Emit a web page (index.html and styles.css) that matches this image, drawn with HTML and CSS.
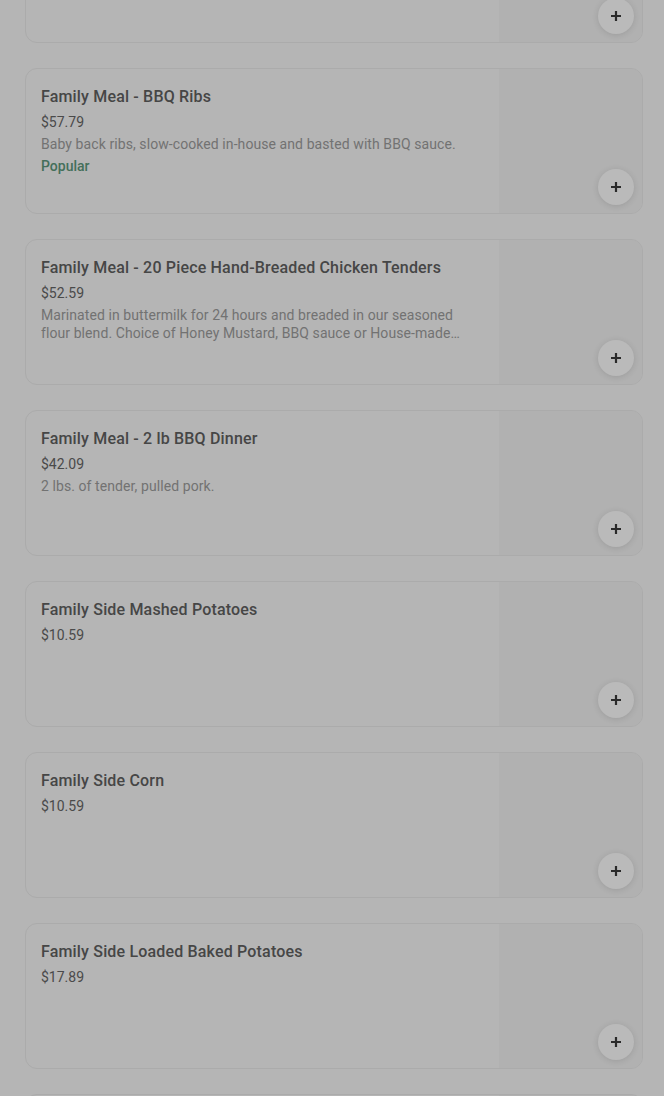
FILE: index.html
```html
<!DOCTYPE html>
<html lang="en">
<head>
<meta charset="utf-8">
<title>Menu</title>
<link rel="stylesheet" href="styles.css">
</head>
<body>
<main class="menu">
  <ul class="items">
    <li class="card">
      <div class="info">
        <h3 class="title">Family Meal - Smoked Chicken</h3>
        <p class="price">$47.39</p>
        <p class="desc">Half smoked chicken, slow-cooked in-house.</p>
      </div>
      <div class="thumb"><button class="add" aria-label="Add"><svg viewBox="0 0 12 12" width="12" height="12"><path d="M6 1v10M1 6h10" stroke="currentColor" stroke-width="2.2" fill="none"/></svg></button></div>
    </li>
    <li class="card">
      <div class="info">
        <h3 class="title">Family Meal - BBQ Ribs</h3>
        <p class="price">$57.79</p>
        <p class="desc">Baby back ribs, slow-cooked in-house and basted with BBQ sauce.</p>
        <p class="tag">Popular</p>
      </div>
      <div class="thumb"><button class="add" aria-label="Add"><svg viewBox="0 0 12 12" width="12" height="12"><path d="M6 1v10M1 6h10" stroke="currentColor" stroke-width="2.2" fill="none"/></svg></button></div>
    </li>
    <li class="card">
      <div class="info">
        <h3 class="title">Family Meal - 20 Piece Hand-Breaded Chicken Tenders</h3>
        <p class="price">$52.59</p>
        <p class="desc">Marinated in buttermilk for 24 hours and breaded in our seasoned flour blend. Choice of Honey Mustard, BBQ sauce or House-made Ranch dressing.</p>
      </div>
      <div class="thumb"><button class="add" aria-label="Add"><svg viewBox="0 0 12 12" width="12" height="12"><path d="M6 1v10M1 6h10" stroke="currentColor" stroke-width="2.2" fill="none"/></svg></button></div>
    </li>
    <li class="card">
      <div class="info">
        <h3 class="title">Family Meal - 2 lb BBQ Dinner</h3>
        <p class="price">$42.09</p>
        <p class="desc">2 lbs. of tender, pulled pork.</p>
      </div>
      <div class="thumb"><button class="add" aria-label="Add"><svg viewBox="0 0 12 12" width="12" height="12"><path d="M6 1v10M1 6h10" stroke="currentColor" stroke-width="2.2" fill="none"/></svg></button></div>
    </li>
    <li class="card">
      <div class="info">
        <h3 class="title">Family Side Mashed Potatoes</h3>
        <p class="price">$10.59</p>
      </div>
      <div class="thumb"><button class="add" aria-label="Add"><svg viewBox="0 0 12 12" width="12" height="12"><path d="M6 1v10M1 6h10" stroke="currentColor" stroke-width="2.2" fill="none"/></svg></button></div>
    </li>
    <li class="card">
      <div class="info">
        <h3 class="title">Family Side Corn</h3>
        <p class="price">$10.59</p>
      </div>
      <div class="thumb"><button class="add" aria-label="Add"><svg viewBox="0 0 12 12" width="12" height="12"><path d="M6 1v10M1 6h10" stroke="currentColor" stroke-width="2.2" fill="none"/></svg></button></div>
    </li>
    <li class="card">
      <div class="info">
        <h3 class="title">Family Side Loaded Baked Potatoes</h3>
        <p class="price">$17.89</p>
      </div>
      <div class="thumb"><button class="add" aria-label="Add"><svg viewBox="0 0 12 12" width="12" height="12"><path d="M6 1v10M1 6h10" stroke="currentColor" stroke-width="2.2" fill="none"/></svg></button></div>
    </li>
    <li class="card">
      <div class="info">
        <h3 class="title">Family Side Mac &amp; Cheese</h3>
        <p class="price">$12.59</p>
      </div>
      <div class="thumb"><button class="add" aria-label="Add"><svg viewBox="0 0 12 12" width="12" height="12"><path d="M6 1v10M1 6h10" stroke="currentColor" stroke-width="2.2" fill="none"/></svg></button></div>
    </li>
  </ul>
</main>
</body>
</html>
```
FILE: styles.css
```css
* { box-sizing: border-box; }
html, body {
  margin: 0;
  padding: 0;
  background: #b5b5b5;
  overflow: hidden;
}
body {
  font-family: Roboto, "Liberation Sans", sans-serif;
  color: #3d3d3d;
}
.menu {
  padding: 0 21px 0 25px;
}
.items {
  list-style: none;
  margin: -103px 0 0 0;
  padding: 0;
  display: flex;
  flex-direction: column;
  gap: 25px;
}
.card {
  position: relative;
  display: flex;
  height: 146px;
  border: 1px solid #ababab;
  border-radius: 12px;
  overflow: hidden;
  background: #b5b5b5;
}
.info {
  flex: 1;
  min-width: 0;
  padding: 17px 28px 0 15px;
}
.title {
  margin: 0;
  font-size: 16px;
  line-height: 22px;
  font-weight: 500;
  letter-spacing: 0.17px;
  color: #464646;
  white-space: nowrap;
}
.price {
  margin: 4px 0 0;
  font-size: 14px;
  line-height: 20px;
  color: #4a4a4a;
}
.desc {
  margin: 3px 0 0;
  font-size: 14px;
  line-height: 18px;
  letter-spacing: 0.08px;
  color: #727272;
  display: -webkit-box;
  -webkit-line-clamp: 2;
  -webkit-box-orient: vertical;
  overflow: hidden;
}
.tag {
  margin: 4px 0 0;
  font-size: 14px;
  line-height: 18px;
  font-weight: 500;
  color: #446f5a;
}
.thumb {
  position: relative;
  flex: 0 0 143px;
  background: #b1b1b1;
}
.add {
  position: absolute;
  right: 8px;
  bottom: 8px;
  width: 36px;
  height: 36px;
  border-radius: 50%;
  border: none;
  padding: 0;
  background: #bababa;
  color: #2a2a2a;
  display: flex;
  align-items: center;
  justify-content: center;
  box-shadow: 0 1px 6px rgba(0,0,0,0.12);
}
```
